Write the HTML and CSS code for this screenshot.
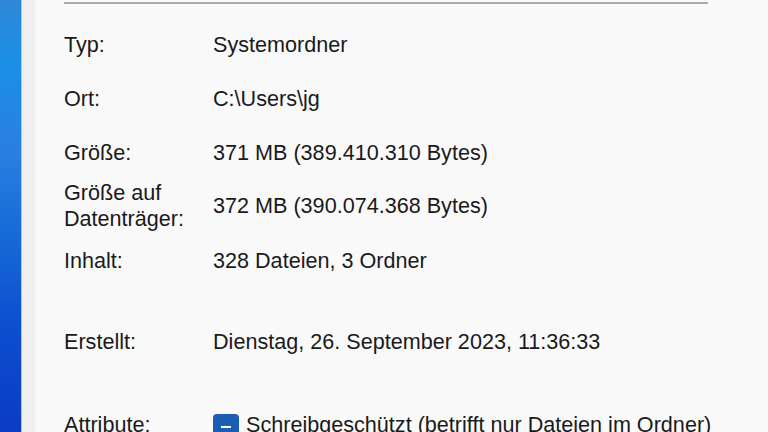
FILE: index.html
```html
<!DOCTYPE html>
<html lang="de">
<head>
<meta charset="utf-8">
<title>Eigenschaften</title>
<link rel="stylesheet" href="styles.css">
</head>
<body>
<div class="screen">
  <div class="wallpaper"></div>
  <div class="frame"></div>
  <div class="dialog">
    <div class="separator"></div>
    <div class="rows">
      <div class="row first"><div class="label">Typ:</div><div class="value">Systemordner</div></div>
      <div class="row"><div class="label">Ort:</div><div class="value">C:\Users\jg</div></div>
      <div class="row"><div class="label">Größe:</div><div class="value">371 MB (389.410.310 Bytes)</div></div>
      <div class="row tight"><div class="label">Größe auf<br>Datenträger:</div><div class="value">372 MB (390.074.368 Bytes)</div></div>
      <div class="row after-two"><div class="label">Inhalt:</div><div class="value">328 Dateien, 3 Ordner</div></div>
      <div class="row wide"><div class="label">Erstellt:</div><div class="value">Dienstag, 26. September 2023, 11:36:33</div></div>
      <div class="row wide"><div class="label">Attribute:</div><div class="value attr"><span class="check"><span class="dash"></span></span>Schreibgeschützt (betrifft nur Dateien im Ordner)</div></div>
    </div>
  </div>
</div>
</body>
</html>
```
FILE: styles.css
```css
html, body {
  margin: 0;
  padding: 0;
  width: 768px;
  height: 432px;
  overflow: hidden;
  background: #f9f9f9;
}
.screen {
  display: flex;
  width: 768px;
  height: 432px;
  font-family: "Liberation Sans", Arial, sans-serif;
  font-size: 21.6px;
  color: #1a1a1a;
}
.wallpaper {
  width: 21px;
  flex: none;
  background: linear-gradient(180deg, #2e86d6 0%, #1a8fe6 15%, #2a7fe0 35%, #1769d8 55%, #0d4fd0 75%, #0a3cc4 100%);
}
.frame {
  width: 14px;
  flex: none;
  background: #efefef;
  border-left: 1px solid #b9c2cc;
  box-sizing: border-box;
}
.dialog {
  flex: 1;
  background: #f9f9f9;
  padding-left: 29px;
}
.separator {
  margin-top: 2px;
  width: 644px;
  height: 2px;
  background: #a9a9a9;
}
.rows {
  display: flex;
  flex-direction: column;
}
.row {
  display: flex;
  align-items: center;
  line-height: 26px;
  margin-top: 28px;
}
.row.first { margin-top: 28px; }
.row.tight { margin-top: 14px; }
.row.after-two { margin-top: 16px; }
.row.wide { margin-top: 55px; }
.label {
  width: 149px;
  flex: none;
}
.value {
  white-space: nowrap;
}
.attr {
  display: flex;
  align-items: center;
}
.check {
  width: 26px;
  height: 26px;
  border-radius: 4px;
  background: #1a5db5;
  margin-right: 7px;
  margin-top: 4px;
  display: flex;
  align-items: center;
  justify-content: center;
  flex: none;
}
.dash {
  width: 10px;
  height: 2px;
  background: #ffffff;
}
```
